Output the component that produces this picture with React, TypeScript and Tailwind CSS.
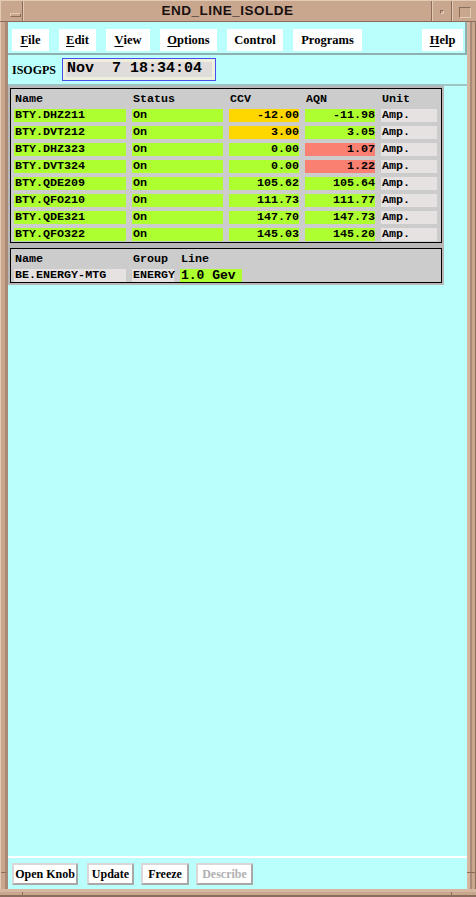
import React from "react";

const mono = { fontFamily: '"Liberation Mono", "DejaVu Sans Mono", monospace' };
const serif = { fontFamily: '"Liberation Serif", "DejaVu Serif", serif' };
const sans = { fontFamily: '"Liberation Sans", Arial, sans-serif' };

type Row = {
  name: string;
  status: string;
  ccv: string;
  aqn: string;
  ccvColor: string;
  aqnColor: string;
};

const GREEN = "bg-[#adff2f]";
const GOLD = "bg-[#ffd700]";
const SALMON = "bg-[#fa8072]";

const rows: Row[] = [
  { name: "BTY.DHZ211", status: "On", ccv: "-12.00", aqn: "-11.98", ccvColor: GOLD, aqnColor: GREEN },
  { name: "BTY.DVT212", status: "On", ccv: "3.00", aqn: "3.05", ccvColor: GOLD, aqnColor: GREEN },
  { name: "BTY.DHZ323", status: "On", ccv: "0.00", aqn: "1.07", ccvColor: GREEN, aqnColor: SALMON },
  { name: "BTY.DVT324", status: "On", ccv: "0.00", aqn: "1.22", ccvColor: GREEN, aqnColor: SALMON },
  { name: "BTY.QDE209", status: "On", ccv: "105.62", aqn: "105.64", ccvColor: GREEN, aqnColor: GREEN },
  { name: "BTY.QFO210", status: "On", ccv: "111.73", aqn: "111.77", ccvColor: GREEN, aqnColor: GREEN },
  { name: "BTY.QDE321", status: "On", ccv: "147.70", aqn: "147.73", ccvColor: GREEN, aqnColor: GREEN },
  { name: "BTY.QFO322", status: "On", ccv: "145.03", aqn: "145.20", ccvColor: GREEN, aqnColor: GREEN },
];

function MenuItem({ label, u, w }: { label: string; u?: boolean; w: string }) {
  return (
    <div
      className={`${w} h-[22px] bg-white flex items-center justify-center text-[12.5px] font-bold text-black`}
      style={serif}
    >
      {u ? (
        <>
          <span className="underline underline-offset-2">{label[0]}</span>
          {label.slice(1)}
        </>
      ) : (
        label
      )}
    </div>
  );
}

function Cell({ w, color, right, children }: { w: string; color: string; right?: boolean; children: React.ReactNode }) {
  return (
    <div
      className={`${w} h-[13px] ${color} flex items-center ${right ? "justify-end" : "justify-start pl-[1px]"} text-[11.7px] leading-[13px] font-bold text-black whitespace-pre`}
      style={mono}
    >
      {children}
    </div>
  );
}

function HeaderLabel({ w, children }: { w: string; children: React.ReactNode }) {
  return (
    <div className={`${w} pl-[1px] text-[11.7px] leading-[14px] font-bold text-black`} style={mono}>
      {children}
    </div>
  );
}

function Button({ label, w, disabled }: { label: string; w: string; disabled?: boolean }) {
  return (
    <div
      className={`${w} h-[22px] bg-white border-2 border-t-[#d8d8d8] border-l-[#d8d8d8] border-r-[#a8a8a8] border-b-[#a8a8a8] flex items-center justify-center text-[12px] font-bold ${disabled ? "text-[#b0b0b0]" : "text-black"}`}
      style={serif}
    >
      {label}
    </div>
  );
}

function TitleBar() {
  return (
    <div className="h-[22px] flex bg-[#c9a78f] border-t border-t-[#e4cab4] border-b border-b-[#8c6c5a]">
      <div className="w-[23px] border-r border-r-[#8c6c5a] border-l border-l-[#e4cab4] relative">
        <div className="absolute left-[9px] top-[12px] w-[11px] h-[4px] border border-t-[#e4cab4] border-l-[#e4cab4] border-r-[#8c6c5a] border-b-[#8c6c5a]" />
      </div>
      <div className="flex-1 flex items-center justify-center border-l border-l-[#e4cab4] border-r border-r-[#8c6c5a]">
        <span className="text-[13.5px] font-bold tracking-[0.5px] text-[#1a1010]" style={sans}>
          END_LINE_ISOLDE
        </span>
      </div>
      <div className="w-[20px] border-l border-l-[#e4cab4] border-r border-r-[#8c6c5a] flex items-center justify-center">
        <div className="w-[4px] h-[4px] border border-t-[#8c6c5a] border-l-[#8c6c5a] border-r-[#e4cab4] border-b-[#e4cab4] mt-[2px]" />
      </div>
      <div className="w-[24px] border-l border-l-[#e4cab4] flex items-center justify-center">
        <div className="w-[12px] h-[11px] border border-t-[#8c6c5a] border-l-[#8c6c5a] border-r-[#e4cab4] border-b-[#e4cab4] mt-[2px]" />
      </div>
    </div>
  );
}

export default function App() {
  return (
    <div className="w-[476px] h-[897px] flex flex-col bg-[#c9a78f] overflow-hidden">
      <TitleBar />
      <div className="flex flex-1 min-h-0">
        {/* left frame */}
        <div className="w-[8px] flex flex-col border-l border-l-[#e4cab4]">
          <div className="flex-1 border-r-[3px] border-r-[#a88a76]" />
          <div className="h-[17px] border-t border-t-[#8c6c5a] border-r-[3px] border-r-[#a88a76]" />
        </div>

        {/* content */}
        <div className="w-[459px] bg-[#bbfffc] flex flex-col">
          {/* menu bar */}
          <div className="h-[33px] flex items-start pt-[7px] pl-[4px] pr-[2px] gap-[10px] border-b-2 border-b-[#8eb0ae] border-r-2 border-r-[#8eb0ae]">
            <MenuItem label="File" u w="w-[37px]" />
            <MenuItem label="Edit" u w="w-[37px]" />
            <MenuItem label="View" u w="w-[44px]" />
            <MenuItem label="Options" u w="w-[57px]" />
            <MenuItem label="Control" w="w-[56px]" />
            <MenuItem label="Programs" w="w-[69px]" />
            <div className="ml-auto">
              <MenuItem label="Help" u w="w-[41px]" />
            </div>
          </div>

          {/* id + time */}
          <div className="h-[31px] flex items-center pl-[4px] border-b-2 border-b-[#9fc4c2]">
            <span className="w-[50px] text-[12px] font-bold text-black" style={serif}>
              ISOGPS
            </span>
            <div className="w-[154px] h-[23px] border border-[#4a4cf0] bg-[#eef0dc] p-[3px]">
              <div
                className="h-full bg-[#e0dcdc] flex items-center pl-[1px] text-[15px] font-bold text-black whitespace-pre"
                style={mono}
              >
                {"Nov  7 18:34:04"}
              </div>
            </div>
          </div>

          {/* main area */}
          <div className="flex-1 flex flex-col">
            <div className="w-[436px] bg-[#b8b8b8] pt-[2px] pl-[2px] pb-[2px] pr-[2px] flex flex-col">
              {/* table panel */}
              <div className="border border-black bg-[#cccccc] pl-[3px] pr-[3px] pt-[2px] pb-[1px]">
                <div className="flex gap-[6px] mb-[3px] h-[14px] mt-[1px]">
                  <HeaderLabel w="w-[112px]">Name</HeaderLabel>
                  <HeaderLabel w="w-[91px]">Status</HeaderLabel>
                  <HeaderLabel w="w-[70px]">CCV</HeaderLabel>
                  <HeaderLabel w="w-[70px]">AQN</HeaderLabel>
                  <HeaderLabel w="w-[56px]">Unit</HeaderLabel>
                </div>
                <div className="flex flex-col gap-[4px]">
                  {rows.map((r) => (
                    <div key={r.name} className="flex gap-[6px]">
                      <Cell w="w-[112px]" color={GREEN}>{r.name}</Cell>
                      <Cell w="w-[91px]" color={GREEN}>{r.status}</Cell>
                      <Cell w="w-[70px]" color={r.ccvColor} right>{r.ccv}</Cell>
                      <Cell w="w-[70px]" color={r.aqnColor} right>{r.aqn}</Cell>
                      <Cell w="w-[56px]" color="bg-[#e6e2e2]">Amp.</Cell>
                    </div>
                  ))}
                </div>
              </div>

              {/* device panel */}
              <div className="mt-[5px] border border-black bg-[#cccccc] pl-[3px] pr-[3px] pt-[2px]">
                <div className="flex gap-[6px] mb-[3px] h-[14px] mt-[1px]">
                  <HeaderLabel w="w-[112px]">Name</HeaderLabel>
                  <HeaderLabel w="w-[42px]">Group</HeaderLabel>
                  <HeaderLabel w="w-[62px]">Line</HeaderLabel>
                </div>
                <div className="flex gap-[6px]">
                  <Cell w="w-[112px]" color="bg-[#e6e2e2]">BE.ENERGY-MTG</Cell>
                  <Cell w="w-[42px]" color="bg-[#e6e2e2]">ENERGY</Cell>
                  <div
                    className="w-[62px] h-[13px] bg-[#adff2f] pl-[1px] flex items-center text-[13px] font-bold text-black whitespace-pre"
                    style={mono}
                  >
                    1.0 Gev
                  </div>
                </div>
              </div>
            </div>
          </div>

          {/* buttons */}
          <div className="h-[33px] border-t-2 border-t-white flex items-start pt-[5px] pl-[4px]">
            <Button label="Open Knob" w="w-[66px]" />
            <div className="ml-[9px]">
              <Button label="Update" w="w-[47px]" />
            </div>
            <div className="ml-[7px]">
              <Button label="Freeze" w="w-[48px]" />
            </div>
            <div className="ml-[7px]">
              <Button label="Describe" w="w-[57px]" disabled />
            </div>
          </div>
        </div>

        {/* right frame */}
        <div className="w-[9px] flex flex-col">
          <div className="flex-1 flex">
            <div className="w-[3px] bg-[#d6b8a2]" />
            <div className="w-[2px] bg-[#a88a76]" />
            <div className="flex-1 border-r border-r-[#8c6c5a]" />
          </div>
          <div className="h-[17px] border-t border-t-[#8c6c5a] flex">
            <div className="w-[3px] bg-[#d6b8a2]" />
            <div className="w-[2px] bg-[#a88a76]" />
            <div className="flex-1 border-r border-r-[#8c6c5a]" />
          </div>
        </div>
      </div>

      {/* bottom frame */}
      <div className="h-[8px] flex border-t-[3px] border-t-[#d6b8a2] border-b-2 border-b-[#8c6c5a]">
        <div className="w-[23px] border-r border-r-[#8c6c5a]" />
        <div className="w-[429px] border-r border-r-[#8c6c5a]" />
        <div className="flex-1" />
      </div>
    </div>
  );
}
